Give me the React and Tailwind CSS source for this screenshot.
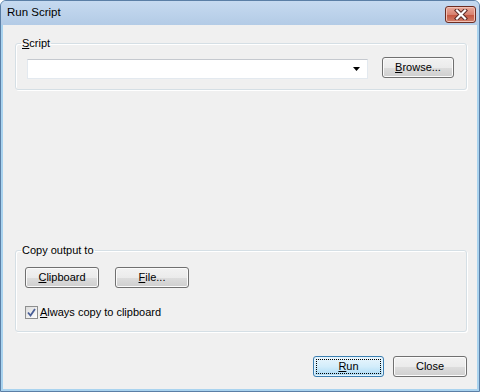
import React from 'react'

const font = { fontFamily: '"Liberation Sans", Arial, sans-serif' }

function Btn({ children, w = 'w-[74px]', primary = false }) {
    if (primary) {
        return (
            <button className={`${w} h-[21px] rounded-[3px] border border-[#3c7fb1] bg-gradient-to-b from-[#eaf6fd] via-[#d3edfb] to-[#a7d9f5] shadow-[inset_0_0_0_1px_#e4f3fc] p-[2px] text-[11px] leading-none text-black`}>
                <span className="flex h-full w-full items-center justify-center border border-dotted border-black">
                    {children}
                </span>
            </button>
        )
    }
    return (
        <button className={`${w} h-[21px] rounded-[3px] border border-[#707070] bg-[linear-gradient(#f2f2f2_0%,#ebebeb_50%,#dddddd_51%,#cfcfcf_100%)] shadow-[inset_0_0_0_1px_#fbfbfb] flex items-center justify-center text-[11px] leading-none text-black`}>
            {children}
        </button>
    )
}

function GroupBox({ label, children, className = '' }) {
    return (
        <fieldset className={`rounded-[3px] border border-[#d5dfe5] shadow-[inset_1px_1px_0_#ffffff,1px_1px_0_#ffffff] p-0 ${className}`}>
            <legend className="ml-[5px] px-[1px] text-[11px] leading-[16px] text-black">{label}</legend>
            {children}
        </fieldset>
    )
}

export default function App() {
    return (
        <div style={font} className="w-[480px] h-[392px] flex flex-col rounded-t-[6px] border border-[#5b7fa6] bg-[#a9d3ef] overflow-hidden">
            {/* Title bar */}
            <div className="h-[24px] flex items-center justify-between pl-[6px] pr-[3px] bg-gradient-to-b from-[#c6daf0] to-[#b3cbe6]">
                <span className="text-[11.5px] text-black">Run Script</span>
                <div className="w-[31px] h-[17px] mt-[2px] rounded-[3px] border border-[#6d2d22] bg-[linear-gradient(#e9a99a_0%,#d88270_50%,#c4533d_51%,#d0806b_100%)] shadow-[inset_0_0_0_1px_#f1c1b5] flex items-center justify-center">
                    <svg width="14" height="11" viewBox="0 0 14 11">
                        <path d="M3 1.5 L11 9.5 M11 1.5 L3 9.5" stroke="#5a2b26" strokeWidth="4.2" strokeLinecap="square" />
                        <path d="M3 1.5 L11 9.5 M11 1.5 L3 9.5" stroke="#ffffff" strokeWidth="2.2" strokeLinecap="square" />
                    </svg>
                </div>
            </div>

            {/* Client area */}
            <div className="flex-1 mx-[2px] mb-[2px] bg-[#f0f0f0] flex flex-col pl-[12px] pr-[10px] pt-[10px] pb-[12px]">
                <GroupBox label={<><u>S</u>cript</>}>
                    <div className="flex items-start gap-[14px] pl-[11px] pr-[12px] pt-[6px] pb-[10px]">
                        <div className="flex-1 h-[20px] mt-[2px] bg-white border border-[#e3e9ef] border-t-[#c5c9cf] flex items-center justify-end pr-[7px]">
                            <svg width="7" height="4" viewBox="0 0 7 4">
                                <path d="M0 0 H7 L3.5 4 Z" fill="#000" />
                            </svg>
                        </div>
                        <Btn w="w-[72px]"><span><u>B</u>rowse...</span></Btn>
                    </div>
                </GroupBox>

                <div className="flex-1" />

                <GroupBox label="Copy output to">
                    <div className="flex flex-col pl-[9px] pt-[9px] pb-[11px]">
                        <div className="flex gap-[16px]">
                            <Btn><span><u>C</u>lipboard</span></Btn>
                            <Btn><span><u>F</u>ile...</span></Btn>
                        </div>
                        <div className="flex items-center gap-[2px] h-[16px] mt-[16px]">
                            <div className="w-[13px] h-[13px] border border-[#8e8f8f] bg-gradient-to-br from-[#dcdcdc] to-[#ffffff] flex items-center justify-center">
                                <svg width="9" height="9" viewBox="0 0 9 9">
                                    <path d="M1 4.5 L3.5 7.5 L8 1" stroke="#4a5f97" strokeWidth="1.8" fill="none" />
                                </svg>
                            </div>
                            <span className="text-[11px] text-black leading-none"><u>A</u>lways copy to clipboard</span>
                        </div>
                    </div>
                </GroupBox>

                <div className="flex justify-end gap-[9px] mt-[24px]">
                    <Btn w="w-[71px]" primary><span><u>R</u>un</span></Btn>
                    <Btn w="w-[74px]">Close</Btn>
                </div>
            </div>
        </div>
    )
}
